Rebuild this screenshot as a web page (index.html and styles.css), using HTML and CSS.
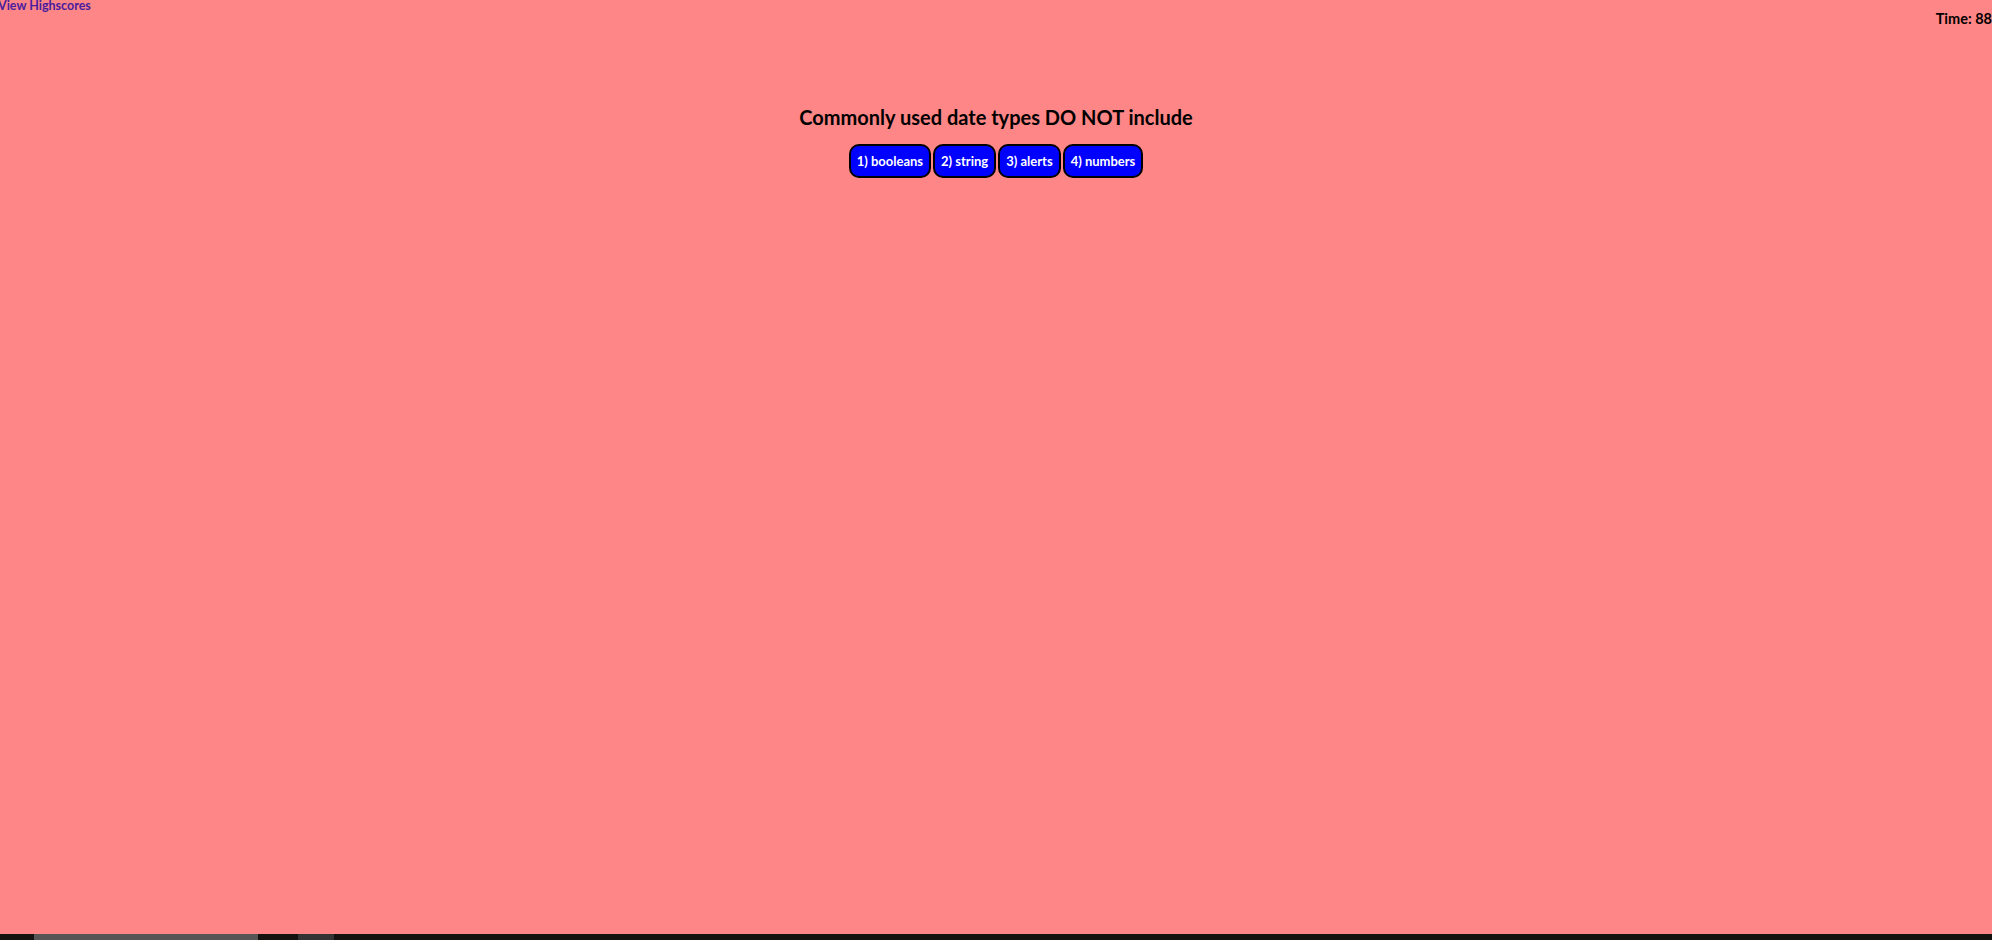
FILE: index.html
```html
<!DOCTYPE html>
<html lang="en">
<head>
<meta charset="utf-8">
<title>Code Quiz</title>
<link rel="stylesheet" href="styles.css">
</head>
<body>
<header class="top">
  <a class="highscores" href="#">View Highscores</a>
  <div class="timer">Time: 88</div>
</header>
<main class="quiz">
  <h3 class="question">Commonly used date types DO NOT include</h3>
  <div class="choices">
    <button class="choice">1) booleans</button>
    <button class="choice">2) string</button>
    <button class="choice">3) alerts</button>
    <button class="choice">4) numbers</button>
  </div>
</main>
<div class="bottom-bar"><span class="thumb"></span><span class="thumb2"></span></div>
</body>
</html>
```
FILE: styles.css
```css
html, body {
  margin: 0;
  padding: 0;
  height: 100%;
}
body {
  background: #ff8686;
  font-family: Lato, "Open Sans", sans-serif;
  color: #000;
  overflow: hidden;
}
.top {
  display: flex;
  justify-content: space-between;
  align-items: flex-start;
}
.highscores {
  color: #4a1c9e;
  font-weight: bold;
  font-size: 12.5px;
  text-decoration: none;
  line-height: 12px;
  margin-left: -2px;
}
.timer {
  font-weight: bold;
  font-size: 14.5px;
  margin-top: 11px;
  margin-right: 0;
  line-height: 16px;
}
.quiz {
  display: flex;
  flex-direction: column;
  align-items: center;
  margin-top: 78px;
}
.question {
  font-size: 20px;
  font-weight: bold;
  margin: 0 0 14px 0;
  line-height: 25px;
}
.choices {
  display: flex;
  gap: 2px;
}
.choice {
  background: #0000ff;
  color: #fff;
  border: 2px solid #000;
  border-radius: 10px;
  font-family: Lato, "Open Sans", sans-serif;
  font-weight: bold;
  font-size: 13px;
  height: 34px;
  padding: 0 6px;
}
.bottom-bar {
  position: fixed;
  left: 0;
  right: 0;
  bottom: 0;
  height: 6px;
  background: #141111;
}
.thumb {
  position: absolute;
  left: 34px;
  width: 224px;
  top: 0;
  height: 6px;
  background: #555;
}
.thumb2 {
  position: absolute;
  left: 298px;
  width: 36px;
  top: 0;
  height: 6px;
  background: #333;
}
```
